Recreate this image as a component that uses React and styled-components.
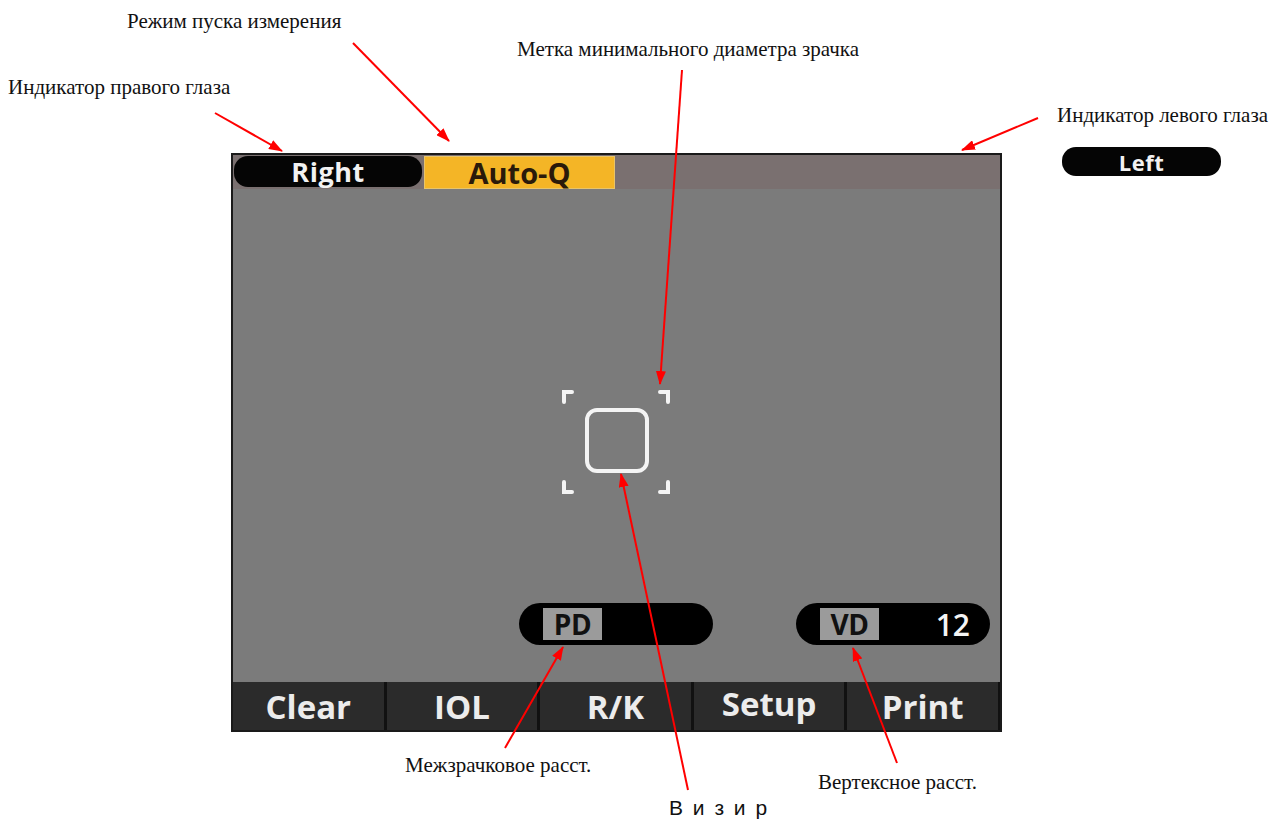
import styled, { createGlobalStyle } from 'styled-components';

const GlobalStyle = createGlobalStyle`
  html, body {
    margin: 0;
    padding: 0;
    background: #ffffff;
  }
`;

// холст схемы
const Canvas = styled.div`
  position: relative;
  width: 1277px;
  height: 822px;
  padding: 153px 0 0 231px;
  box-sizing: border-box;
  overflow: hidden;
`;

// экран прибора
const Screen = styled.div`
  width: 771px;
  height: 579px;
  box-sizing: border-box;
  border: 2px solid #1a1a1a;
  display: flex;
  flex-direction: column;
  background: #7b7b7b;
  font-family: 'Open Sans', 'DejaVu Sans', sans-serif;
  font-weight: 700;
`;

const TopBar = styled.div`
  height: 33px;
  display: flex;
  align-items: stretch;
  gap: 2px;
  padding: 1px 1px 0;
  background: #7a7070;
`;

const EyePill = styled.div`
  width: ${(p) => p.$w}px;
  height: ${(p) => p.$h || 31}px;
  border-radius: 14px;
  background: #050505;
  color: #f2f2f2;
  display: flex;
  align-items: center;
  justify-content: center;
  font-family: 'Open Sans', 'DejaVu Sans', sans-serif;
  font-weight: 700;
  font-size: ${(p) => p.$fs || 27}px;
  line-height: 1;
  letter-spacing: 0.5px;
`;

const ModeTab = styled.div`
  width: 189px;
  background: #f4b526;
  color: #2a1a0a;
  border: 1px solid #e8c46a;
  display: flex;
  align-items: center;
  justify-content: center;
  font-size: 29px;
  line-height: 1;
`;

const Viewport = styled.div`
  flex: 1;
  display: flex;
  flex-direction: column;
`;

const ReticleBox = styled.div`
  flex: 1;
  display: flex;
  align-items: center;
  justify-content: center;
  padding-top: 92px;
`;

const ReadoutRow = styled.div`
  display: flex;
  justify-content: flex-end;
  gap: 83px;
  padding: 0 10px 37px 0;
`;

const Readout = styled.div`
  width: 194px;
  height: 42px;
  box-sizing: border-box;
  border-radius: 21px;
  background: #000;
  display: flex;
  align-items: center;
  padding: 0 20px 0 24px;
`;

const ReadoutTag = styled.span`
  width: 59px;
  height: 32px;
  background: #9b9b9b;
  color: #111;
  font-size: 28px;
  line-height: 32px;
  text-align: center;
  letter-spacing: -0.5px;
`;

const ReadoutValue = styled.span`
  margin-left: auto;
  color: #f4f4f4;
  font-weight: 600;
  font-size: 30px;
`;

const SoftKeys = styled.div`
  height: 48px;
  display: flex;
  gap: 3px;
  background: #111;
  padding-right: 2px;
`;

const SoftKey = styled.div`
  flex: 1;
  background: #2b2b2b;
  color: #ececec;
  display: flex;
  align-items: center;
  justify-content: center;
  font-size: 33px;
  padding-bottom: ${(p) => (p.$raised ? 6 : 0)}px;
  box-sizing: border-box;
`;

// подписи
const Caption = styled.div`
  position: absolute;
  left: ${(p) => p.$x}px;
  top: ${(p) => p.$y}px;
  font-family: 'Liberation Serif', serif;
  font-size: 21px;
  color: #111;
  white-space: nowrap;
`;

const SansCaption = styled(Caption)`
  font-family: 'Liberation Sans', sans-serif;
  font-size: 21px;
  letter-spacing: 2px;
`;

const Sample = styled.div`
  position: absolute;
  left: 1062px;
  top: 147px;
`;

const Arrows = styled.svg`
  position: absolute;
  left: 0;
  top: 0;
  pointer-events: none;
`;

const Reticle = () => (
  <svg width="114" height="112" viewBox="0 0 114 112">
    <g fill="none" stroke="#f4f4f4" strokeWidth="4" strokeLinecap="round">
      <path d="M4 16 V6 H12" />
      <path d="M100 6 H108 V16" />
      <path d="M4 96 V106 H12" />
      <path d="M100 106 H108 V96" />
      <rect x="27" y="24" width="60" height="61" rx="10" />
    </g>
  </svg>
);

const arrows = [
  [215, 113, 282, 151],
  [353, 43, 449, 141],
  [682, 70, 660, 384],
  [1038, 118, 962, 150],
  [688, 790, 621, 474],
  [505, 748, 563, 647],
  [897, 763, 853, 648],
];

const App = () => (
  <Canvas>
    <GlobalStyle />
    <Screen>
      <TopBar>
        <EyePill $w={188}>Right</EyePill>
        <ModeTab>Auto-Q</ModeTab>
      </TopBar>
      <Viewport>
        <ReticleBox>
          <Reticle />
        </ReticleBox>
        <ReadoutRow>
          <Readout>
            <ReadoutTag>PD</ReadoutTag>
          </Readout>
          <Readout>
            <ReadoutTag>VD</ReadoutTag>
            <ReadoutValue>12</ReadoutValue>
          </Readout>
        </ReadoutRow>
      </Viewport>
      <SoftKeys>
        <SoftKey>Clear</SoftKey>
        <SoftKey>IOL</SoftKey>
        <SoftKey>R/K</SoftKey>
        <SoftKey $raised>Setup</SoftKey>
        <SoftKey>Print</SoftKey>
      </SoftKeys>
    </Screen>

    <Caption $x={127} $y={9}>Режим пуска измерения</Caption>
    <Caption $x={8} $y={75}>Индикатор правого глаза</Caption>
    <Caption $x={517} $y={37}>Метка минимального диаметра зрачка</Caption>
    <Caption $x={1057} $y={103}>Индикатор левого глаза</Caption>
    <Caption $x={405} $y={753}>Межзрачковое расст.</Caption>
    <Caption $x={818} $y={770}>Вертексное расст.</Caption>
    <SansCaption $x={669} $y={796}>В и з и р</SansCaption>

    <Sample>
      <EyePill $w={159} $h={29} $fs={22}>Left</EyePill>
    </Sample>

    <Arrows width="1277" height="822" viewBox="0 0 1277 822">
      <defs>
        <marker id="head" viewBox="0 0 14 10" refX="13" refY="5" markerWidth="14" markerHeight="10" markerUnits="userSpaceOnUse" orient="auto">
          <path d="M0 0 L14 5 L0 10 Z" fill="#ff0000" />
        </marker>
      </defs>
      {arrows.map(([x1, y1, x2, y2], i) => (
        <line key={i} x1={x1} y1={y1} x2={x2} y2={y2} stroke="#ff0000" strokeWidth="2" markerEnd="url(#head)" />
      ))}
    </Arrows>
  </Canvas>
);

export default App;
